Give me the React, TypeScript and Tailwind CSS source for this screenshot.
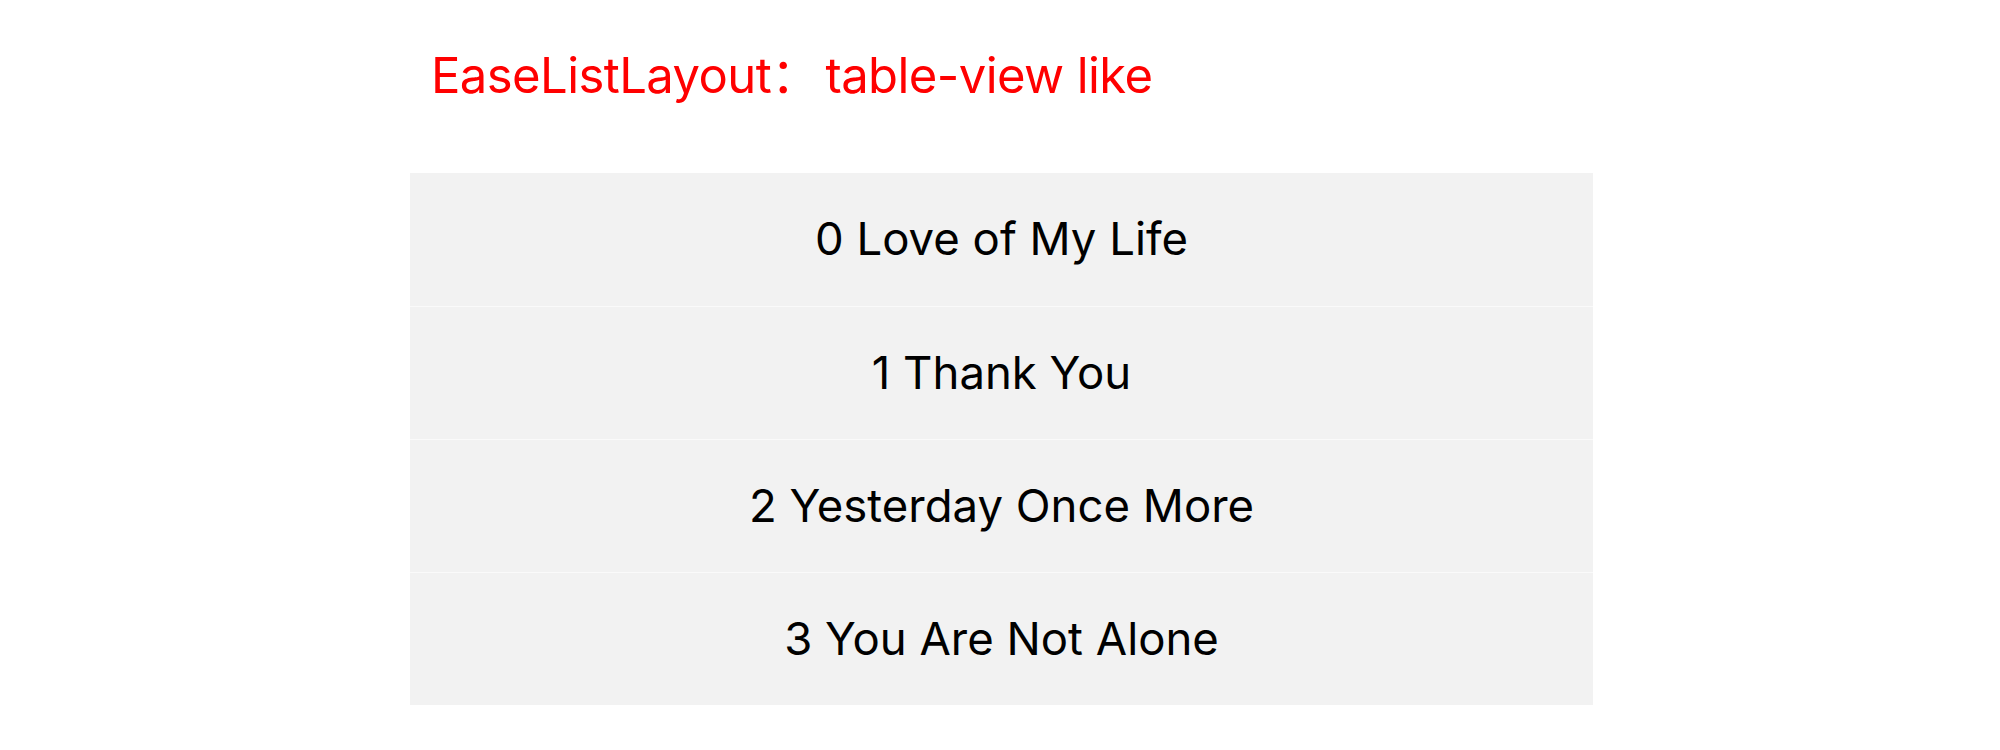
import React from "react";

const items = ["0 Love of My Life", "1 Thank You", "2 Yesterday Once More", "3 You Are Not Alone"];

export default function App() {
  return (
    <div className="w-[2000px] h-[750px] bg-white overflow-hidden" style={{ fontFamily: 'Inter, "Noto Sans CJK SC", sans-serif' }}>
      <div className="pt-[46px] pl-[431px] h-[173px]">
        <div className="text-[49px] leading-[60px] text-[#ff0000] whitespace-pre tracking-[-0.012em]">
          EaseListLayout：<span className="pl-[6px]">table-view like</span>
        </div>
      </div>
      <div className="ml-[410px] w-[1183px] flex flex-col">
        {items.map((t, i) => (
          <div
            key={t}
            className={`h-[133px] bg-[#f2f2f2] flex items-center justify-center text-[45.5px] text-black ${i > 0 ? "border-t border-[#fafafa]" : ""}`}
          >
            {t}
          </div>
        ))}
      </div>
    </div>
  );
}
